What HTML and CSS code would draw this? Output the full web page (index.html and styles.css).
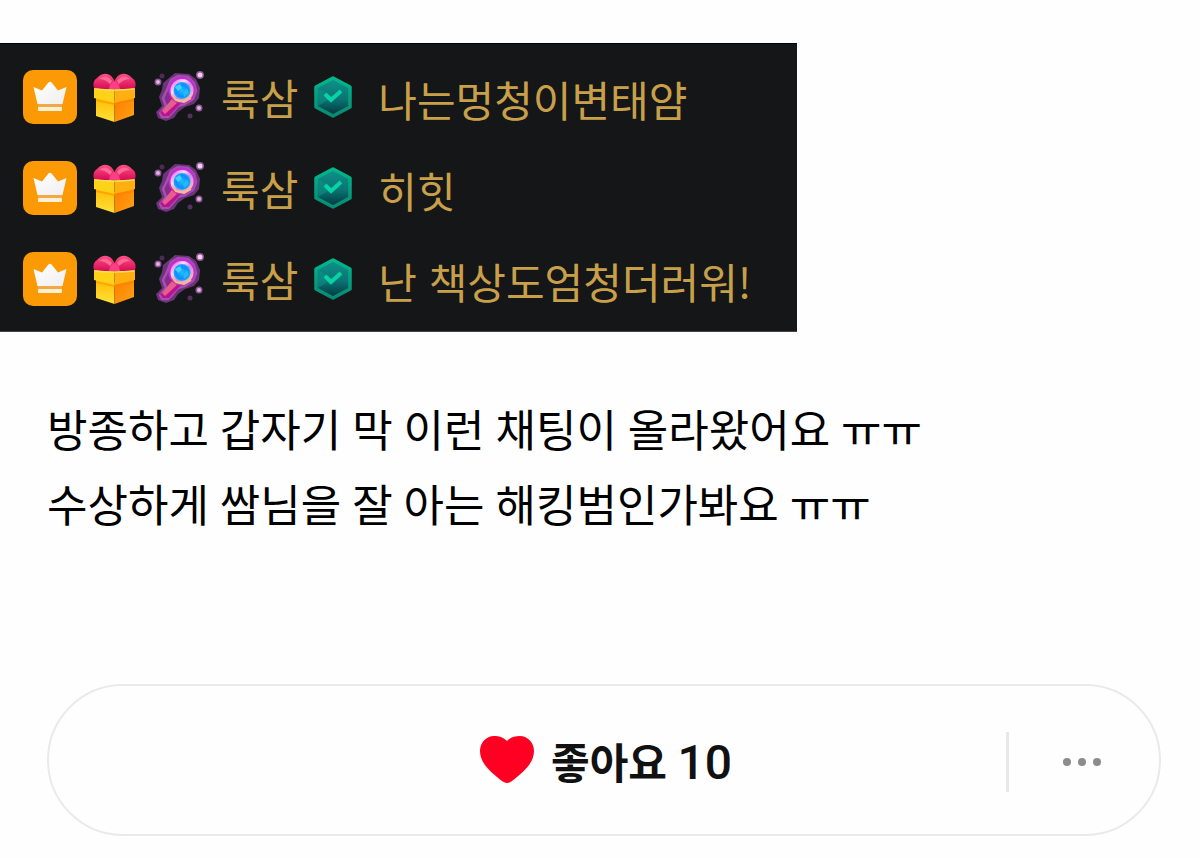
FILE: index.html
```html
<!DOCTYPE html>
<html lang="ko">
<head>
  <meta charset="UTF-8" />
  <meta name="viewport" content="width=device-width, initial-scale=1.0"/>
  <title>룩삼 채팅</title>
  <link rel="stylesheet" href="styles.css">
</head>
<body>
  <!-- shared chat badges -->
  <svg class="sprites" aria-hidden="true">
    <defs>
      <linearGradient id="crownFill" x1="0" y1="0" x2="1" y2="1">
        <stop offset="0" stop-color="#fff"/>
        <stop offset="1" stop-color="#f0eeee"/>
      </linearGradient>
      <linearGradient id="giftLeft" x1="0" y1="0" x2="0" y2="1">
        <stop offset="0" stop-color="#ffb900"/>
        <stop offset="1" stop-color="#ffe23a"/>
      </linearGradient>
      <linearGradient id="giftRight" x1="0" y1="0" x2="1" y2="1">
        <stop offset="0" stop-color="#ff7a00"/>
        <stop offset="1" stop-color="#ffa414"/>
      </linearGradient>
      <linearGradient id="bowFill" x1="0" y1="0" x2="0" y2="1">
        <stop offset="0" stop-color="#ff4f86"/>
        <stop offset="1" stop-color="#d60b55"/>
      </linearGradient>
      <radialGradient id="lensFill">
        <stop offset="0" stop-color="#1cc0ff"/>
        <stop offset="0.6" stop-color="#0c8cff"/>
        <stop offset="1" stop-color="#38b8f5"/>
      </radialGradient>
      <linearGradient id="ringFill" x1="0" y1="0" x2="1" y2="1">
        <stop offset="0" stop-color="#e65cf5"/>
        <stop offset="0.3" stop-color="#ffd8fa"/>
        <stop offset="0.55" stop-color="#d08be8"/>
        <stop offset="1" stop-color="#ffcf9a"/>
      </linearGradient>
      <linearGradient id="hexFill" x1="0" y1="0" x2="0" y2="1">
        <stop offset="0" stop-color="#0f938a"/>
        <stop offset="0.55" stop-color="#0a7474"/>
        <stop offset="1" stop-color="#02343c"/>
      </linearGradient>
      <linearGradient id="hexEdge" x1="0" y1="0" x2="0" y2="1">
        <stop offset="0" stop-color="#00b98b"/>
        <stop offset="1" stop-color="#078b72"/>
      </linearGradient>
    </defs>

    <symbol id="crown" viewBox="0 0 54 54">
      <rect width="54" height="54" rx="10" fill="#fb9a04"/>
      <path d="M10.500 17 L19 20.500 L25 13 Q27 10.500 29 13 L35 20.500 L43.500 17 L39.500 34 H14.500 Z" fill="url(#crownFill)"/>
      <rect x="15" y="34" width="24" height="3" fill="#f0a848"/>
      <rect x="15" y="37" width="24" height="4" rx="1" fill="#fff0d2"/>
    </symbol>

    <symbol id="gift" viewBox="0 0 54 54">
      <path d="M8 26 L26.500 31 L26.500 52 L8 46 Z" fill="url(#giftLeft)"/>
      <path d="M26.500 31 L46 26 V45 L26.500 52 Z" fill="url(#giftRight)"/>
      <path d="M6 17 L26.500 20 V33 L6 28 Z" fill="#ffd21a"/>
      <path d="M47 17 L26.500 20 V33 L47 28 Z" fill="#ffb010"/>
      <path d="M8 29 L26.500 33 V35 L8 31 Z" fill="#ffa400"/>
      <path d="M26.500 33 L46 29 V31 L26.500 35 Z" fill="#fb8600"/>
      <path d="M6 18 Q4 11 9 8 Q14 3 19 4 Q24 5 26.500 11 Q29 5 34 4 Q39 3 44 8 Q49 11 47 18 Q38 20 26.500 19 Q15 20 6 18 Z" fill="url(#bowFill)"/>
      <path d="M11 9 Q18 3 24 11 L22 14 Q17 9 11 9 Z M42 9 Q35 3 29 11 L31 14 Q36 9 42 9 Z" fill="#ff6a95"/>
      <path d="M21 19 Q22 12 26.500 11 Q31 12 32 19 Z" fill="#fa3f84"/>
      <path d="M7 19 Q26 21 46 19" fill="none" stroke="#ffe15a" stroke-width="1.500"/>
    </symbol>

    <symbol id="wand" viewBox="0 0 54 54">
      <path d="M16 8 L22 3 L36 4 L43 9 L47 18 L46 28 L41 34 L32 37 L25 42 L21 48 L13 51 L5 48 L3 42 L9 36 L6 27 L9 20 L10 13 Z" fill="#6d347a"/>
      <path d="M18 10 L25 6 L35 7 L41 13 L43 21 L40 29 L32 34 L25 36 L20 42 L15 47 L9 47 L7 43 L13 36 L10 28 L14 20 Z" fill="#80308c" stroke="#a350b0" stroke-width="2.500" stroke-linejoin="round"/>
      <path d="M17 27 L27 34 L16 46 L10 46 L7 42 L15 35 Z" fill="#bd128f"/>
      <path d="M19 29 L24 33 L12 44 L9 41 Z" fill="#e4608c"/>
      <circle cx="29" cy="20" r="13.500" fill="#c22fd0"/>
      <circle cx="29" cy="20.500" r="10" fill="url(#lensFill)" stroke="url(#ringFill)" stroke-width="3"/>
      <path d="M19 25 L23 30 L31 32 L38 28" fill="none" stroke="#f5bd80" stroke-width="2"/>
      <path d="M22 17 L27 14 L29 18 L25 21 Z" fill="#45d2fa"/>
      <path d="M30 23 L34 18 L36 23 L31 27 Z" fill="#25b8f5"/>
      <circle cx="47" cy="5" r="4" fill="#8c5593"/>
      <circle cx="47" cy="5" r="2.500" fill="#f6cdf2"/>
      <circle cx="5" cy="12" r="3.500" fill="#8c5593"/>
      <circle cx="5" cy="12" r="2" fill="#e6afe6"/>
      <circle cx="9" cy="6" r="2.500" fill="#4c2c57"/>
      <circle cx="46" cy="38" r="3.500" fill="#8c5593"/>
      <circle cx="46" cy="38" r="2" fill="#e6afe6"/>
      <circle cx="37" cy="46" r="2.500" fill="#55305f"/>
    </symbol>

    <symbol id="verified" viewBox="0 0 40 42">
      <path d="M20 2 L37 11 V31 L20 40 L3 31 V11 Z" fill="url(#hexFill)" stroke="url(#hexEdge)" stroke-width="3.500" stroke-linejoin="round"/>
      <path d="M5 12 L20 21 L5 30 Z" fill="#10938a" opacity="0.500"/>
      <path d="M12 18 L18 24 L28 15" fill="none" stroke="#08d3a3" stroke-width="4"/>
    </symbol>
  </svg>

  <main class="post">
    <ul class="chat">
      <li class="chat-row">
        <svg class="badge"><use href="#crown"/></svg>
        <svg class="badge"><use href="#gift"/></svg>
        <svg class="badge"><use href="#wand"/></svg>
        <span class="name">룩삼</span>
        <svg class="verified"><use href="#verified"/></svg>
        <span class="message">나는멍청이변태얌</span>
      </li>
      <li class="chat-row">
        <svg class="badge"><use href="#crown"/></svg>
        <svg class="badge"><use href="#gift"/></svg>
        <svg class="badge"><use href="#wand"/></svg>
        <span class="name">룩삼</span>
        <svg class="verified"><use href="#verified"/></svg>
        <span class="message">히힛</span>
      </li>
      <li class="chat-row">
        <svg class="badge"><use href="#crown"/></svg>
        <svg class="badge"><use href="#gift"/></svg>
        <svg class="badge"><use href="#wand"/></svg>
        <span class="name">룩삼</span>
        <svg class="verified"><use href="#verified"/></svg>
        <span class="message">난 책상도엄청더러워!</span>
      </li>
    </ul>

    <p class="text">방종하고 갑자기 막 이런 채팅이 올라왔어요 ㅠㅠ<br>수상하게 쌈님을 잘 아는 해킹범인가봐요 ㅠㅠ</p>

    <div class="actions">
      <button type="button" class="like-btn">
        <svg class="heart" viewBox="0 0 56 50" aria-hidden="true">
          <path d="M28 6 C24 2 20 1 15 1 C7 1 1 8 1 16 C1 29 13 38 23 46 Q28 50 33 46 C43 38 55 29 55 16 C55 8 49 1 41 1 C36 1 32 2 28 6 Z" fill="#ff0022"/>
        </svg>
        <span>좋아요 <span class="count">10</span></span>
      </button>
      <button type="button" class="more-btn" aria-label="더보기">
        <svg class="dots" viewBox="0 0 38 8" aria-hidden="true">
          <circle cx="4" cy="4" r="4"/>
          <circle cx="19" cy="4" r="4"/>
          <circle cx="34" cy="4" r="4"/>
        </svg>
      </button>
    </div>
  </main>
</body>
</html>
```

FILE: styles.css
```css
* {
  box-sizing: border-box;
}

body {
  margin: 0;
  background: #fefefe;
  color: #000;
  font-family: Roboto, 'Noto Sans CJK KR', sans-serif;
}

.sprites {
  position: absolute;
  width: 0;
  height: 0;
}

.post {
  padding: 43px 0 22px;
}

/* chat capture */
.chat {
  display: flex;
  flex-direction: column;
  gap: 37px;
  width: fit-content;
  max-width: 100%;
  margin: 0;
  padding: 26px 46px 25px 23px;
  list-style: none;
  background: #141617;
  border-top: 1px solid #000;
  border-bottom: 1px solid #444;
  color: #c9a04a;
  font-family: 'Noto Sans CJK KR', sans-serif;
  font-size: 42px;
  line-height: 54px;
}

.chat-row {
  display: flex;
  align-items: center;
  gap: 11px;
  height: 54px;
}

.badge {
  flex: none;
  width: 54px;
  height: 54px;
}

.name {
  margin: 0 4px 0 3px;
}

.verified {
  flex: none;
  width: 40px;
  height: 42px;
}

.message {
  margin-left: 14px;
  padding-top: 3px;
}

.text {
  margin: 63px 47px 0;
  font-size: 44px;
  line-height: 75px;
}

/* like bar */
.actions {
  display: flex;
  align-items: center;
  height: 152px;
  margin: 139px 39px 0 47px;
  border: 2px solid #e9eaeb;
  border-radius: 76px;
}

button {
  display: flex;
  align-items: center;
  justify-content: center;
  padding: 0;
  border: none;
  background: none;
  font-family: inherit;
  cursor: pointer;
}

.like-btn {
  flex: 1;
  gap: 16px;
  height: 100%;
  padding-left: 156px;
  color: #111;
  font-size: 42px;
  font-weight: 700;
}

.count {
  font-size: 48px;
  font-weight: 500;
}

.heart {
  width: 56px;
  height: 50px;
}

.more-btn {
  width: 153px;
  height: 60px;
  margin-top: 4px;
  padding-right: 4px;
  border-left: 3px solid #e6e8ea;
}

.dots {
  width: 38px;
  height: 8px;
  fill: #8c8c8c;
}
```
